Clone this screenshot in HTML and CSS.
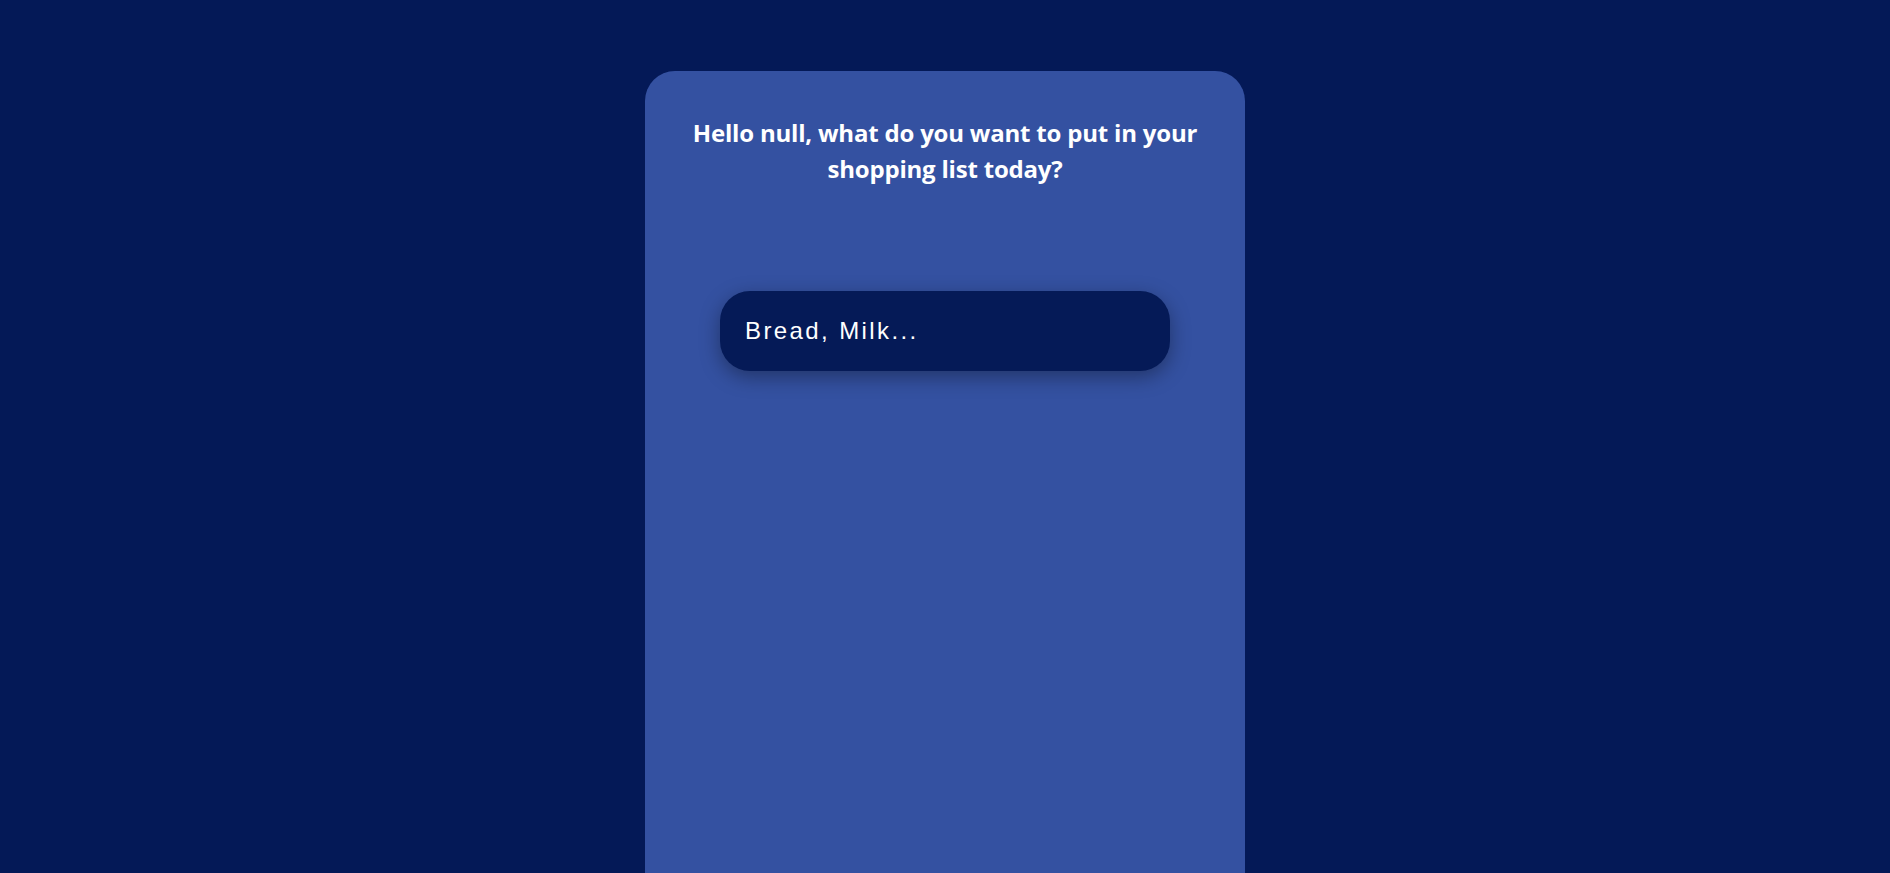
FILE: index.html
```html
<!DOCTYPE html>
<html lang="en">
<head>
<meta charset="utf-8">
<title>Shopping list</title>
<link rel="stylesheet" href="styles.css">
</head>
<body>
<main class="card">
  <h1 class="greeting">Hello null, what do you want to put in your shopping list today?</h1>
  <form class="add-form">
    <input class="item-input" type="text" placeholder="Bread, Milk...">
  </form>
</main>
</body>
</html>
```
FILE: styles.css
```css
html, body {
  margin: 0;
  padding: 0;
  height: 100%;
  overflow: hidden;
}
body {
  background: #041957;
  font-family: "Liberation Sans", Arial, sans-serif;
}
.card {
  box-sizing: border-box;
  width: 600px;
  height: calc(100% - 71px);
  margin: 71px auto 0;
  padding: 44px 40px 0;
  background: #3451a1;
  border-radius: 30px 30px 0 0;
  display: flex;
  flex-direction: column;
  align-items: center;
}
.greeting {
  margin: 0;
  font-family: "Open Sans", sans-serif;
  font-weight: 700;
  font-size: 24px;
  line-height: 36px;
  color: #ffffff;
  text-align: center;
  letter-spacing: -0.2px;
}
.add-form {
  margin-top: 104px;
}
.item-input {
  box-sizing: border-box;
  width: 450px;
  height: 80px;
  padding: 0 25px;
  border: none;
  outline: none;
  border-radius: 30px;
  background: #051a57;
  color: #ffffff;
  font-family: "Liberation Sans", Arial, sans-serif;
  font-size: 24px;
  letter-spacing: 2.4px;
  box-shadow: 0 6px 20px rgba(0, 0, 0, 0.35);
}
.item-input::placeholder {
  color: #ffffff;
  opacity: 1;
}
```
